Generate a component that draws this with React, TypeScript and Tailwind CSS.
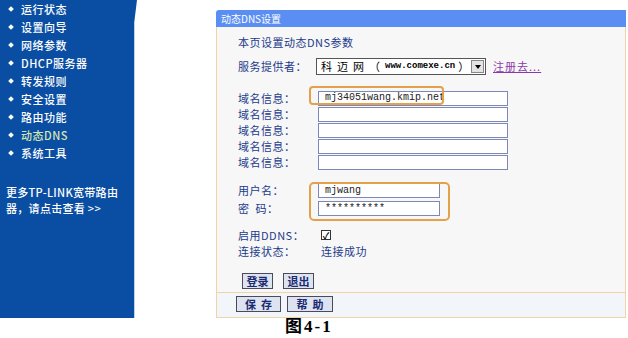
const cjk = 'font-["SimSun","Noto_Sans_CJK_SC",sans-serif]'

const menu = ['运行状态', '设置向导', '网络参数', 'DHCP服务器', '转发规则', '安全设置', '路由功能', '动态DNS', '系统工具']

function Input({ value, w = 'w-[190px]' }: { value?: string; w?: string }) {
  return (
    <div
      className={`${w} h-[15px] bg-white border border-[#7d88b8] flex items-center px-[6px] font-["Liberation_Mono",monospace] text-[10px] text-[#222] leading-none`}
    >
      {value}
    </div>
  )
}

function Btn({ label, w }: { label: string; w: string }) {
  return (
    <div
      className={`${w} h-[16px] flex items-center justify-center bg-[#dde3f0] border border-[#4a4a5a] text-[11px] font-bold text-[#1a2a70] leading-none`}
    >
      {label}
    </div>
  )
}

function Label({ children }: { children: React.ReactNode }) {
  return <div className="w-[80px] shrink-0 text-[11px] text-[#1d3a8a] leading-none tracking-[0.5px]">{children}</div>
}

export default function App() {
  return (
    <div className={`w-[628px] h-[338px] bg-white flex flex-col ${cjk}`}>
      <div className="flex h-[318px]">
        <div className="w-[137px] h-full bg-[#0a4ea3] [clip-path:polygon(0_0,100%_0,98%_7%,98%_100%,0_100%)]">
          {menu.map((m) => (
            <div key={m} className="h-[18px] flex items-center pl-[9px] gap-[8px]">
              <span className="w-[4px] h-[4px] bg-white rotate-45 inline-block" />
              <span
                className={`text-[11px] font-medium leading-none tracking-[0.5px] ${m === '动态DNS' ? 'text-[#d6e6b0]' : 'text-white'}`}
              >
                {m}
              </span>
            </div>
          ))}
          <div className="mt-[22px] pl-[6px] text-[11px] font-medium text-white leading-[16px] tracking-[0.3px]">
            <div>更多TP-LINK宽带路由</div>
            <div>器，请点击查看 &gt;&gt;</div>
          </div>
        </div>

        <div className="ml-[79px] mt-[10px] w-[410px] h-[308px] relative flex flex-col">
          <div className="h-[17px] bg-[#5b8ef2] rounded-tl-[3px] flex items-center pl-[5px]">
            <span className="text-[10px] text-white leading-none">动态DNS设置</span>
          </div>
          <div className="flex-1 bg-[#f7f7f7] border-l border-r border-b border-[#f0d4a8] flex flex-col">
            <div className="flex-1 pl-[21px]">
              <div className="mt-[10px] h-[12px] text-[11px] text-[#1d3a8a] leading-none tracking-[0.5px]">本页设置动态DNS参数</div>
              <div className="mt-[9px] flex items-center h-[17px]">
                <Label>服务提供者：</Label>
                <div className="w-[170px] h-[17px] bg-white border border-[#555] flex items-center -ml-[2px]">
                  <span className="flex-1 pl-[4px] text-[11px] text-black leading-none whitespace-pre flex items-center">
                    <span className="tracking-[5px]">科迈网（</span>
                    <span className='font-["Liberation_Mono",monospace] text-[9px] font-bold'>www.comexe.cn</span>
                    <span className="ml-[3px]">）</span>
                  </span>
                  <span className="w-[13px] h-[13px] mr-[1px] bg-[#e4e4e4] border border-[#888] flex items-center justify-center">
                    <span className="w-0 h-0 border-l-[3px] border-r-[3px] border-t-[4px] border-l-transparent border-r-transparent border-t-black" />
                  </span>
                </div>
                <span className="ml-[7px] text-[11px] text-[#8a3aa8] underline leading-none tracking-[1px]">注册去...</span>
              </div>
              <div className="mt-[15px] flex flex-col">
                {['mj34051wang.kmip.net', '', '', '', ''].map((v, i) => (
                  <div key={i} className="h-[16px] flex items-center">
                    <Label>域名信息：</Label>
                    <Input value={v} />
                  </div>
                ))}
              </div>
              <div className="mt-[13px] flex flex-col gap-[3px]">
                <div className="h-[15px] flex items-center">
                  <Label>用户名：</Label>
                  <Input value="mjwang" w="w-[122px]" />
                </div>
                <div className="h-[15px] flex items-center">
                  <Label>密&nbsp;&nbsp;码：</Label>
                  <Input value="**********" w="w-[122px]" />
                </div>
              </div>
              <div className="mt-[11px] h-[16px] flex items-center">
                <Label>启用DDNS：</Label>
                <span className="ml-[3px] w-[10px] h-[10px] border border-[#333] bg-white flex items-center justify-center text-[9px] leading-none font-bold">
                  ✓
                </span>
              </div>
              <div className="h-[16px] flex items-center">
                <Label>连接状态：</Label>
                <span className="ml-[3px] text-[11px] text-[#1d3a8a] leading-none tracking-[0.5px]">连接成功</span>
              </div>
              <div className="mt-[14px] flex gap-[10px] pl-[4px]">
                <Btn label="登录" w="w-[31px]" />
                <Btn label="退出" w="w-[31px]" />
              </div>
            </div>
            <div className="h-[25px] border-t border-[#f0d4a8] bg-[#f2f5fa] flex items-center gap-[6px] pl-[19px] pb-[2px]">
              <Btn label={'保\u00a0\u00a0存'} w="w-[45px]" />
              <Btn label={'帮\u00a0\u00a0助'} w="w-[46px]" />
            </div>
          </div>

          <div className="absolute left-[93px] top-[76px] w-[135px] h-[19px] border-2 border-[#e3a24a] rounded-[4px]" />
          <div className="absolute left-[93px] top-[172px] w-[141px] h-[39px] border-2 border-[#e3a24a] rounded-[5px]" />
        </div>
      </div>
      <div className="pl-[285px] font-['Liberation_Serif','Noto_Sans_CJK_SC',serif] text-[17px] font-bold text-black leading-[18px] tracking-[2px]">
        图4-1
      </div>
    </div>
  )
}
